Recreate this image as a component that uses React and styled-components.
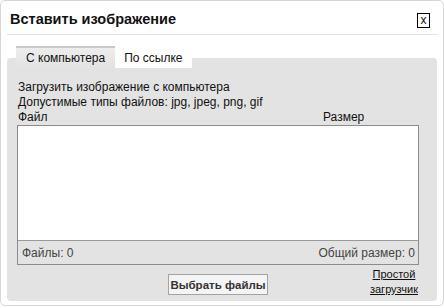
import styled, { createGlobalStyle } from "styled-components";

const Global = createGlobalStyle`
  body {
    margin: 0;
    background: #fff;
    font-family: "Liberation Sans", Arial, sans-serif;
    color: #111;
  }
`;

const Dialog = styled.div`
  box-sizing: border-box;
  width: 444px;
  height: 306px;
  border: 1px solid #d6d6d6;
  border-radius: 5px;
  padding: 0 6px 4px 6px;
  display: flex;
  flex-direction: column;
  background: #fff;
`;

const Header = styled.div`
  height: 33px;
  display: flex;
  align-items: center;
  justify-content: space-between;
  border-bottom: 1px solid #e2e2e2;
  padding: 0 7px 0 3px;
`;

const Title = styled.div`
  font-size: 14.5px;
  font-weight: bold;
  color: #111;
  margin-top: 2px;
`;

const Close = styled.div`
  box-sizing: border-box;
  width: 13px;
  height: 15px;
  border: 1px solid #000;
  font-size: 12px;
  line-height: 12px;
  text-align: center;
  margin-top: 6px;
`;

const Tabs = styled.div`
  display: flex;
  align-items: flex-end;
  margin: 11px 0 -10px 9px;
  position: relative;
  z-index: 1;
`;

const Tab = styled.div`
  padding: ${(p) => (p.active ? "2px 10px 2px" : "0 9px 2px")};
  font-size: 12px;
  line-height: 16px;
  background: ${(p) =>
    p.active ? "linear-gradient(#ededed, #e3e3e3)" : "#fff"};
  border-top: ${(p) => (p.active ? "2px solid #c9c9c9" : "none")};
  color: #111;
`;

const Panel = styled.div`
  flex: 1;
  background: #e3e3e3;
  border-radius: 4px;
  padding: 22px 10px 0 10px;
  display: flex;
  flex-direction: column;
`;

const Info = styled.div`
  font-size: 12px;
  line-height: 15px;
  padding-left: 1px;
`;

const Columns = styled.div`
  width: 402px;
  display: flex;
  font-size: 12px;
  line-height: 15px;
  padding-left: 1px;
  box-sizing: border-box;
`;

const NameCol = styled.div`
  flex: 1;
`;

const SizeCol = styled.div`
  width: 96px;
`;

const FileBox = styled.div`
  box-sizing: border-box;
  width: 402px;
  height: 140px;
  border: 1px solid #8c8c8c;
  display: flex;
  flex-direction: column;
`;

const List = styled.div`
  flex: 1;
  background: #fff;
`;

const Footer = styled.div`
  height: 23px;
  border-top: 1px solid #9a9a9a;
  display: flex;
  align-items: center;
  justify-content: space-between;
  padding: 0 3px 0 4px;
  font-size: 12px;
  color: #444;
`;

const Bottom = styled.div`
  width: 402px;
  display: grid;
  grid-template-columns: 1fr auto 1fr;
  align-items: start;
  margin-top: 2px;
`;

const Button = styled.button`
  grid-column: 2;
  margin-top: 7px;
  width: 100px;
  height: 21px;
  padding: 0;
  white-space: nowrap;
  border: 1px solid #a3a3a3;
  background: #f4f4f4;
  font-family: "Liberation Sans", Arial, sans-serif;
  font-size: 11.5px;
  font-weight: bold;
  color: #333;
`;

const Link = styled.a`
  grid-column: 3;
  justify-self: end;
  text-align: center;
  font-size: 11px;
  line-height: 15px;
  color: #111;
  text-decoration: underline;
  margin-right: 1px;
`;

export default function App() {
  return (
    <>
      <Global />
      <Dialog>
        <Header>
          <Title>Вставить изображение</Title>
          <Close>x</Close>
        </Header>
        <Tabs>
          <Tab active>С компьютера</Tab>
          <Tab>По ссылке</Tab>
        </Tabs>
        <Panel>
          <Info>Загрузить изображение с компьютера</Info>
          <Info>Допустимые типы файлов: jpg, jpeg, png, gif</Info>
          <Columns>
            <NameCol>Файл</NameCol>
            <SizeCol>Размер</SizeCol>
          </Columns>
          <FileBox>
            <List />
            <Footer>
              <span>Файлы: 0</span>
              <span>Общий размер: 0</span>
            </Footer>
          </FileBox>
          <Bottom>
            <Button>Выбрать файлы</Button>
            <Link href="#">
              Простой
              <br />
              загрузчик
            </Link>
          </Bottom>
        </Panel>
      </Dialog>
    </>
  );
}
